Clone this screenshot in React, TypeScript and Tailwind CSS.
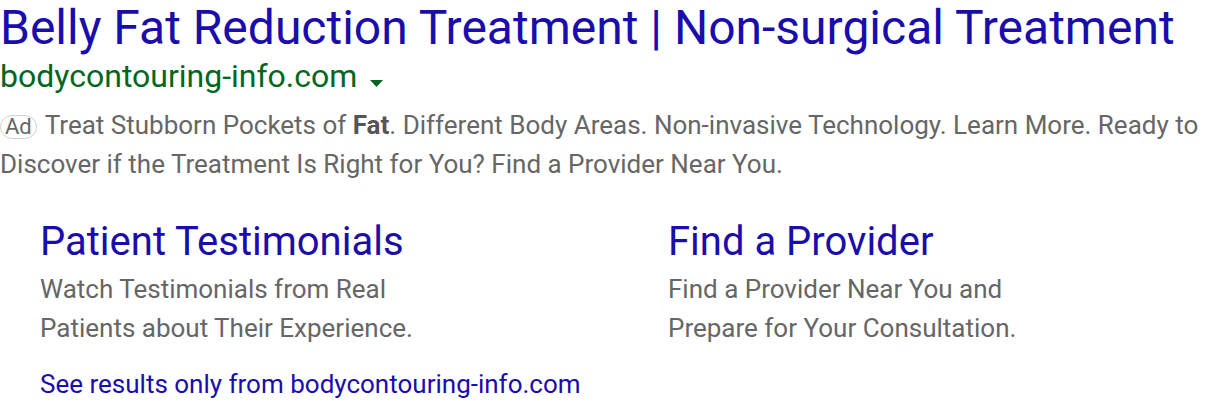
const SITELINKS = [
  {
    title: "Patient Testimonials",
    lines: ["Watch Testimonials from Real", "Patients about Their Experience."],
  },
  {
    title: "Find a Provider",
    lines: ["Find a Provider Near You and", "Prepare for Your Consultation."],
  },
];

export default function App() {
  return (
    <div className="h-[408px] w-[1216px] overflow-hidden bg-white font-['Roboto',sans-serif]">
      {/* Headline */}
      <a href="#" className="block text-[48px] leading-[56px] text-[#1a0dab] whitespace-nowrap">
        Belly Fat Reduction Treatment | Non-surgical Treatment
      </a>

      {/* Display URL */}
      <div className="flex items-start gap-[13px] text-[32px] leading-[40px] text-[#006621]">
        <span>bodycontouring-info.com</span>
        <svg width="13" height="7" viewBox="0 0 13 7" className="mt-[24px]">
          <path d="M0 0h13L6.5 7z" fill="#006621" />
        </svg>
      </div>

      {/* Description */}
      <p className="mt-[10px] text-[26px] leading-[39px] text-[#666]">
        <span className="mr-[8px] inline-block rounded-full border border-[#d0d0d0] px-[4px] text-[22px] leading-[22px] align-[0px]">
          Ad
        </span>
        Treat Stubborn Pockets of <b className="font-bold text-[#555]">Fat</b>. Different Body Areas. Non-invasive
        Technology. Learn More. Ready to Discover if the Treatment Is Right for You? Find a Provider Near You.
      </p>

      {/* Sitelinks */}
      <div className="mt-[34px] grid grid-cols-[628px_1fr] pl-[40px]">
        {SITELINKS.map((s) => (
          <div key={s.title}>
            <a href="#" className="block text-[40px] leading-[48px] text-[#1a0dab]">
              {s.title}
            </a>
            <div className="mt-[4px] text-[26px] leading-[39px] text-[#666]">
              {s.lines.map((l) => (
                <div key={l}>{l}</div>
              ))}
            </div>
          </div>
        ))}
      </div>

      <a href="#" className="mt-[20px] block pl-[40px] text-[26px] leading-[32px] text-[#1a0dab]">
        See results only from bodycontouring-info.com
      </a>
    </div>
  );
}
